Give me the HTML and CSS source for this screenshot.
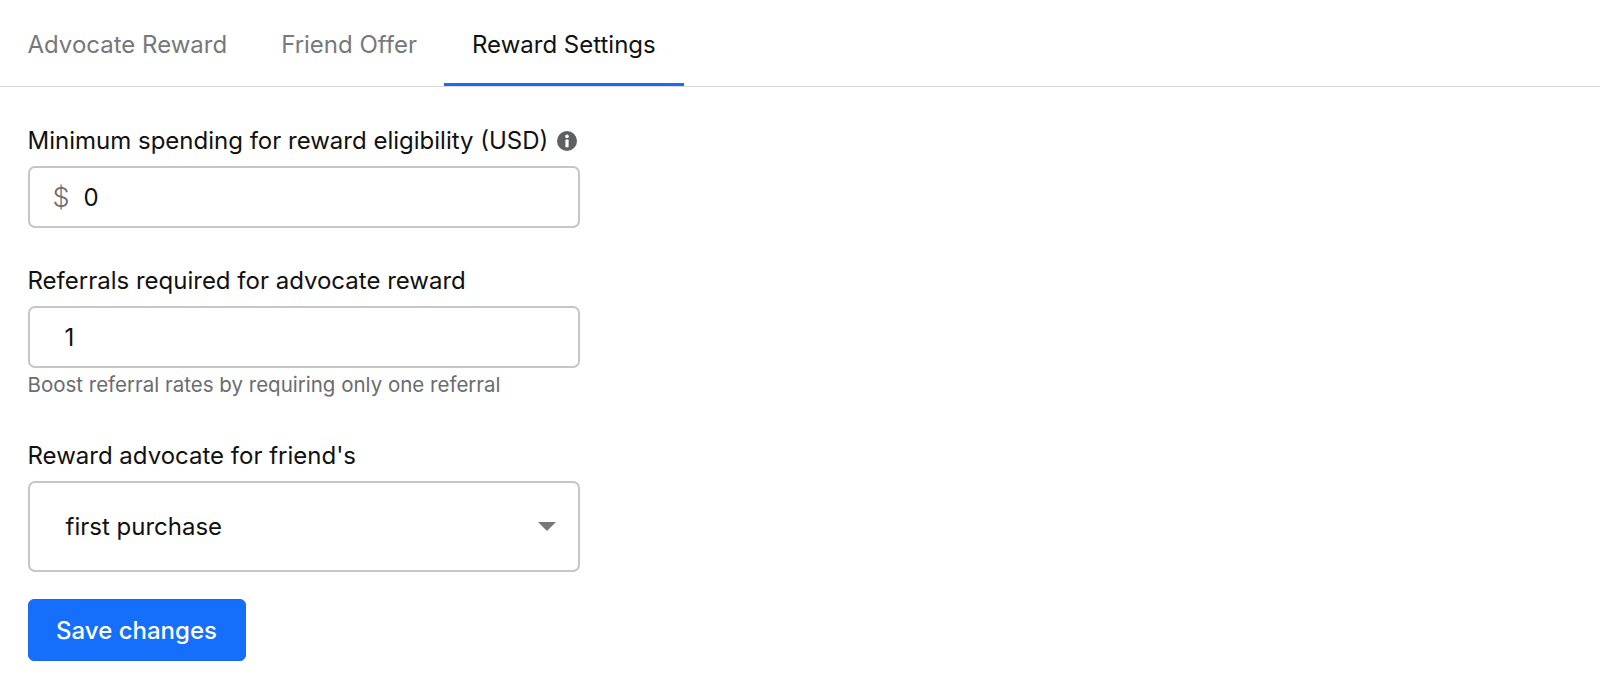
FILE: index.html
```html
<!DOCTYPE html>
<html lang="en">
<head>
    <meta charset="UTF-8">
    <title>Reward Settings</title>
    <link rel="stylesheet" href="styles.css">
</head>
<body>
    <nav class="tabs">
        <a class="tab">Advocate Reward</a>
        <a class="tab">Friend Offer</a>
        <a class="tab active">Reward Settings</a>
    </nav>
    <form class="settings">
        <div class="field field-spend">
            <div class="label">
                Minimum spending for reward eligibility (USD)
                <svg class="info" viewBox="0 0 20 20" width="20" height="20">
                    <circle cx="10" cy="10" r="10" fill="#5f6063"/>
                    <circle cx="10" cy="5.4" r="1.8" fill="#fff"/>
                    <rect x="8.4" y="8.6" width="3.2" height="7.6" rx="0.6" fill="#fff"/>
                </svg>
            </div>
            <div class="box">
                <span class="prefix">$</span>
                <span class="value">0</span>
            </div>
        </div>
        <div class="field field-referrals">
            <div class="label">Referrals required for advocate reward</div>
            <div class="box box-plain">
                <span class="value">1</span>
            </div>
            <div class="help">Boost referral rates by requiring only one referral</div>
        </div>
        <div class="field field-friend">
            <div class="label">Reward advocate for friend's</div>
            <div class="box box-select">
                <span class="value">first purchase</span>
                <span class="caret"></span>
            </div>
        </div>
        <button type="button" class="save">Save changes</button>
    </form>
</body>
</html>
```

FILE: styles.css
```css
body {
    margin: 0;
    background-color: #ffffff;
    color: #111111;
    font-family: Inter, "Liberation Sans", sans-serif;
    font-size: 24px;
}

.tabs {
    display: flex;
    height: 86px;
    padding-left: 0.5px;
    border-bottom: 1px solid #d9d9db;
}

.tab {
    display: flex;
    align-items: center;
    box-sizing: border-box;
    height: 86px;
    padding: 6px 27px 0;
    color: #77787b;
    border-bottom: 3px solid transparent;
}

.tab.active {
    padding: 6px 28px 0;
    color: #111111;
    border-bottom-color: #1a6cf0;
}

.settings {
    width: 552px;
    padding: 0 27.5px;
}

.label {
    display: flex;
    align-items: center;
    gap: 9px;
    height: 29px;
    margin-bottom: 11px;
    white-space: nowrap;
}

.field-spend {
    padding-top: 39px;
}

.field-referrals {
    padding-top: 38px;
}

.field-friend {
    padding-top: 44px;
}

.box {
    display: flex;
    align-items: center;
    box-sizing: border-box;
    height: 62px;
    padding: 0 23px;
    background-color: #ffffff;
    border: 2px solid #c6c6c8;
    border-radius: 7px;
}

.box-plain {
    padding-left: 35px;
}

.box-select {
    justify-content: space-between;
    height: 91px;
    padding: 0 22px 0 36px;
}

.prefix {
    margin-right: 14px;
    color: #6b6c6f;
    font-size: 27px;
    font-weight: 300;
}

.caret {
    width: 0;
    height: 0;
    border-left: 9px solid transparent;
    border-right: 9px solid transparent;
    border-top: 9px solid #77787b;
}

.help {
    margin-top: 4px;
    color: #6b6c6f;
    font-size: 20.5px;
}

.save {
    display: block;
    box-sizing: border-box;
    width: 218px;
    height: 62px;
    margin-top: 27px;
    padding: 0;
    background-color: #156ffa;
    color: #ffffff;
    border: 1px solid #1768ea;
    border-radius: 6px;
    font-family: inherit;
    font-size: 24px;
    font-weight: 500;
}
```
